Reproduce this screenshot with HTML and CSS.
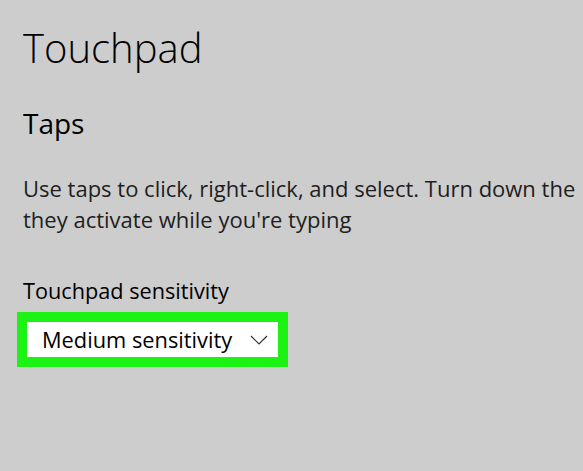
FILE: index.html
```html
<!DOCTYPE html>
<html lang="en">
<head>
    <meta charset="UTF-8">
    <title>Touchpad</title>
    <link rel="stylesheet" href="styles.css">
</head>
<body>
    <div class="settings">
        <h1>Touchpad</h1>
        <h2>Taps</h2>
        <p class="desc">
            <span>Use taps to click, right-click, and select. Turn down the</span>
            <span>they activate while you're typing</span>
        </p>
        <div class="field">
            <label>Touchpad sensitivity</label>
            <div class="highlight">
                <div class="select">
                    <span>Medium sensitivity</span>
                    <svg width="18" height="10" viewBox="0 0 18 10">
                        <path d="M1 1 L9 9 L17 1" fill="none" stroke="#333" stroke-width="1.2"/>
                    </svg>
                </div>
            </div>
        </div>
    </div>
</body>
</html>
```

FILE: styles.css
```css
* {
    margin: 0;
    padding: 0;
    box-sizing: border-box;
    font-family: 'Open Sans', sans-serif;
}

body {
    background-color: #cdcdcd;
    color: #000;
    overflow: hidden;
}

.settings {
    padding: 20px 0 0 23px;
}

.settings h1 {
    font-size: 40px;
    font-weight: 300;
    line-height: 56px;
}

.settings h2 {
    font-size: 28px;
    font-weight: 400;
    line-height: 38px;
    margin-top: 28px;
}

.desc {
    margin-top: 31px;
    font-size: 22px;
    line-height: 31px;
    color: #1e1e1e;
}

.desc span {
    display: block;
    white-space: nowrap;
}

.field {
    margin-top: 42px;
}

.field label {
    display: block;
    font-size: 21.7px;
    line-height: 28px;
}

.highlight {
    display: inline-block;
    margin: 7px 0 0 -6px;
    padding: 10px;
    background-color: #1cf214;
}

.select {
    width: 251px;
    height: 35px;
    background-color: #fff;
    display: flex;
    align-items: center;
    justify-content: space-between;
    padding: 0 10px 0 15px;
    font-size: 21.8px;
}
```
